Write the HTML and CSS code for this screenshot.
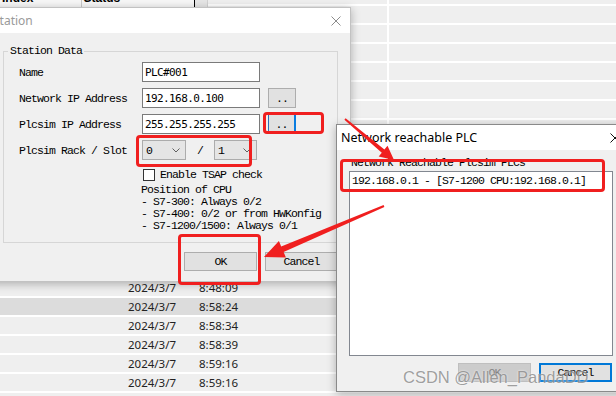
FILE: index.html
```html
<!DOCTYPE html>
<html lang="en">
<head>
    <meta charset="UTF-8">
    <meta name="viewport" content="width=device-width, initial-scale=1.0">
    <title>Station</title>
    <link rel="stylesheet" href="styles.css">
</head>
<body>
    <div class="desk">
        <div class="upper">
            <div class="oldwin">
                <div class="oldhead">
                    <span class="oldcell first">Index</span>
                    <span class="oldcell">Status</span>
                </div>
                <div class="oldscroll"></div>
            </div>
        </div>
        <div class="log">
            <div class="log-row"><span class="log-date">2024/3/7</span><span>8:48:09</span></div>
            <div class="log-row sel"><span class="log-date">2024/3/7</span><span>8:58:24</span></div>
            <div class="log-row"><span class="log-date">2024/3/7</span><span>8:58:34</span></div>
            <div class="log-row"><span class="log-date">2024/3/7</span><span>8:58:39</span></div>
            <div class="log-row"><span class="log-date">2024/3/7</span><span>8:59:16</span></div>
            <div class="log-row"><span class="log-date">2024/3/7</span><span>8:59:16</span></div>
        </div>
    </div>

    <!-- station dialog (inactive) -->
    <div class="dlg station">
        <div class="dlg-title">
            <span>Station</span>
            <svg class="dlg-x" width="10" height="10" viewBox="0 0 10 10"><path d="M0.5 0.5 L9.5 9.5 M9.5 0.5 L0.5 9.5" stroke="#8c8c8c" stroke-width="1" fill="none"/></svg>
        </div>
        <div class="dlg-body">
            <fieldset class="group">
                <legend>Station Data</legend>
                <div class="form">
                    <span class="lbl">Name</span>
                    <div class="field">PLC#001</div>
                    <span></span>

                    <span class="lbl">Network IP Address</span>
                    <div class="field">192.168.0.100</div>
                    <div class="dots">..</div>

                    <span class="lbl">Plcsim IP Address</span>
                    <div class="field">255.255.255.255</div>
                    <div class="dots focus">..</div>

                    <span class="lbl">Plcsim Rack / Slot</span>
                    <div class="slot">
                        <div class="combo c0"><span>0</span><svg width="8" height="5" viewBox="0 0 8 5"><polyline points="0.5,0.5 4,4 7.5,0.5" stroke="#606060" fill="none"/></svg></div>
                        <span class="slash">/</span>
                        <div class="combo c1"><span>1</span><svg width="8" height="5" viewBox="0 0 8 5"><polyline points="0.5,0.5 4,4 7.5,0.5" stroke="#606060" fill="none"/></svg></div>
                    </div>
                </div>
                <div class="notes">
                    <div class="check"><span class="box"></span><span>Enable TSAP check</span></div>
                    <div class="cpu">
                        <div>Position of CPU</div>
                        <div>- S7-300: Always 0/2</div>
                        <div>- S7-400: 0/2 or from HWKonfig</div>
                        <div>- S7-1200/1500: Always 0/1</div>
                    </div>
                </div>
            </fieldset>
            <div class="actions">
                <div class="btn">OK</div>
                <div class="btn">Cancel</div>
            </div>
        </div>
    </div>

    <!-- reachable PLC dialog (active) -->
    <div class="dlg reach">
        <div class="dlg-title">
            <span>Network reachable PLC</span>
            <svg class="dlg-x" width="10" height="10" viewBox="0 0 10 10"><path d="M0.5 0.5 L9.5 9.5 M9.5 0.5 L0.5 9.5" stroke="#111" stroke-width="1" fill="none"/></svg>
        </div>
        <div class="dlg-body">
            <div class="list-label">Network Reachable Plcsim PLCs</div>
            <div class="list">
                <div>192.168.0.1 - [S7-1200 CPU:192.168.0.1]</div>
            </div>
            <div class="actions">
                <div class="btn off">OK</div>
                <div class="btn def">Cancel</div>
            </div>
        </div>
    </div>

    <!-- red marks -->
    <div class="mark m-dots"></div>
    <div class="mark m-slot"></div>
    <div class="mark m-ok"></div>
    <div class="mark m-list"></div>

    <svg class="arrows" width="616" height="396" viewBox="0 0 616 396">
        <polygon points="344.4,119.8 381.8,152.8 378.7,156.6 394,160 387.5,145.8 384.4,149.6 345.6,118.2" fill="#f01f1f"/>
        <polygon points="383.6,205.1 281.2,246.4 278.9,240.9 264,257 285.9,257.5 283.6,252.0 384.4,206.9" fill="#f01f1f"/>
    </svg>

    <div class="watermark">CSDN @Allen_PandaDD</div>
</body>
</html>
```

FILE: styles.css
```css
* {
    box-sizing: border-box;
}
body {
    margin: 0;
    width: 616px;
    height: 396px;
    overflow: hidden;
    position: relative;
    background: #efefef;
    font-family: "Liberation Mono", monospace;
    font-size: 11.5px;
    letter-spacing: -0.9px;
    color: #000;
}

/* background window */
.desk {
    display: flex;
    flex-direction: column;
    height: 396px;
}
.upper {
    height: 279px;
    background:
        linear-gradient(to right, transparent 387px, #fff 387px, #fff 389px, transparent 389px),
        repeating-linear-gradient(to bottom, transparent 0, transparent 4px, #fff 4px, #fff 6px, transparent 6px, transparent 19px);
}
.oldwin {
    display: flex;
    width: 208px;
    height: 30px;
}
.oldhead {
    width: 195px;
    background: #f7f7f7;
    border-right: 1px solid #000;
    display: flex;
    overflow: hidden;
}
.oldcell {
    display: block;
    width: 113px;
    height: 30px;
    margin-top: -8px;
    padding-left: 2px;
    font-family: "Liberation Sans", sans-serif;
    font-size: 12px;
    font-weight: bold;
    letter-spacing: 0;
    line-height: 12px;
}
.oldcell.first {
    width: 82px;
    border-right: 1px solid #c8c8c8;
}
.oldscroll {
    width: 13px;
    background: #e6e6e6;
    border-right: 1px solid #d2d2d2;
}
.log {
    flex: 1;
    display: flex;
    flex-direction: column;
}
.log-row {
    height: 19px;
    flex: none;
    border-bottom: 2px solid #fff;
    padding-left: 128px;
    display: flex;
    align-items: center;
    font-family: "Noto Sans", sans-serif;
    font-size: 11.5px;
    letter-spacing: 0;
    color: #222;
}
.log-row.sel {
    background: #dcdcdc;
}
.log-date {
    width: 71px;
}

/* dialogs */
.dlg {
    position: absolute;
    display: flex;
    flex-direction: column;
    background: #f0f0f0;
    box-shadow: 0 2px 9px rgba(0, 0, 0, 0.28);
}
.station {
    left: -16px;
    top: 7px;
    width: 367px;
    height: 275px;
    border: 1px solid #c2c2c2;
}
.reach {
    left: 336px;
    top: 124px;
    width: 290px;
    height: 268px;
    border: 1px solid #8a8a8a;
}
.dlg-title {
    height: 25px;
    flex: none;
    background: #fff;
    display: flex;
    align-items: center;
    justify-content: space-between;
    font-family: "Noto Sans", sans-serif;
    font-size: 12px;
    letter-spacing: 0;
}
.station .dlg-title {
    color: #9a9a9a;
    padding: 0 9px 0 8px;
}
.reach .dlg-title {
    font-size: 12.5px;
    padding: 0 5px 0 4px;
}

/* station data group */
.group {
    margin: 12px 12px 0 18px;
    border: 1px solid #d6d6d6;
    padding: 5px 10px 10px 15px;
    min-width: 0;
}
.group legend {
    margin-left: -11px;
    padding: 0 2px;
    line-height: 12px;
}
.form {
    display: grid;
    grid-template-columns: 123px 118px 36px;
    grid-auto-rows: 20px;
    row-gap: 6px;
    align-items: center;
}
.field {
    height: 20px;
    border: 1px solid #7a7a7a;
    background: #fff;
    padding-left: 2px;
    display: flex;
    align-items: center;
    font-family: "DejaVu Sans Mono", monospace;
    font-size: 11px;
    letter-spacing: -0.6px;
}
.dots {
    width: 28px;
    height: 20px;
    margin-left: 8px;
    background: #e1e1e1;
    border: 1px solid #adadad;
    display: flex;
    align-items: flex-end;
    justify-content: center;
    padding-bottom: 3px;
    line-height: 10px;
}
.dots.focus {
    border-color: #2f6fb8;
    border-right: 2px solid #0a7de0;
}
.slot {
    grid-column: span 2;
    display: flex;
    align-items: center;
}
.combo {
    height: 20px;
    background: #e5e5e5;
    border: 1px solid #acacac;
    display: flex;
    align-items: center;
    justify-content: space-between;
    padding: 0 5px 0 3px;
}
.combo.c0 {
    width: 44px;
}
.combo.c1 {
    width: 43px;
}
.slash {
    width: 28px;
    text-align: center;
}
.notes {
    margin: 8px 0 0 122px;
}
.check {
    display: flex;
    align-items: center;
    gap: 5px;
    height: 13px;
}
.box {
    width: 12px;
    height: 12px;
    margin-left: 2px;
    border: 1px solid #333;
    background: #fff;
}
.cpu {
    margin-top: 3px;
    line-height: 12px;
}
.actions {
    display: flex;
    justify-content: flex-end;
    gap: 8px;
    margin: 9px 12px 0 0;
}
.btn {
    width: 73px;
    height: 19px;
    background: #e1e1e1;
    border: 1px solid #adadad;
    display: flex;
    align-items: center;
    justify-content: center;
}
.btn.off {
    background: #cccccc;
    border-color: #bfbfbf;
    color: #838383;
}
.btn.def {
    border: 2px solid #0078d7;
}

/* reachable list */
.reach .dlg-body {
    padding: 7px 0 0 12px;
}
.list-label {
    margin-left: 2px;
    line-height: 12px;
}
.list {
    margin-top: 2px;
    width: 264px;
    height: 185px;
    background: #fff;
    border: 1px solid #828790;
    padding: 3px 2px;
    line-height: 12px;
}
.reach .actions {
    width: 264px;
    margin: 7px 0 0;
    padding-right: 1px;
}

/* annotations */
.mark {
    position: absolute;
    border: 3px solid #f01f1f;
    border-radius: 4px;
}
.m-dots {
    left: 263px;
    top: 112px;
    width: 61px;
    height: 22px;
}
.m-slot {
    left: 136px;
    top: 135px;
    width: 116px;
    height: 32px;
}
.m-ok {
    left: 178px;
    top: 234px;
    width: 83px;
    height: 51px;
}
.m-list {
    left: 340px;
    top: 159px;
    width: 265px;
    height: 33px;
}
.arrows {
    position: absolute;
    left: 0;
    top: 0;
}
.watermark {
    position: absolute;
    left: 403px;
    top: 367px;
    font-family: "Liberation Sans", sans-serif;
    font-size: 16.5px;
    line-height: 20px;
    letter-spacing: 0;
    color: rgba(120, 120, 120, 0.7);
    text-shadow: 0 0 2px rgba(255, 255, 255, 0.9);
    white-space: nowrap;
}
```
